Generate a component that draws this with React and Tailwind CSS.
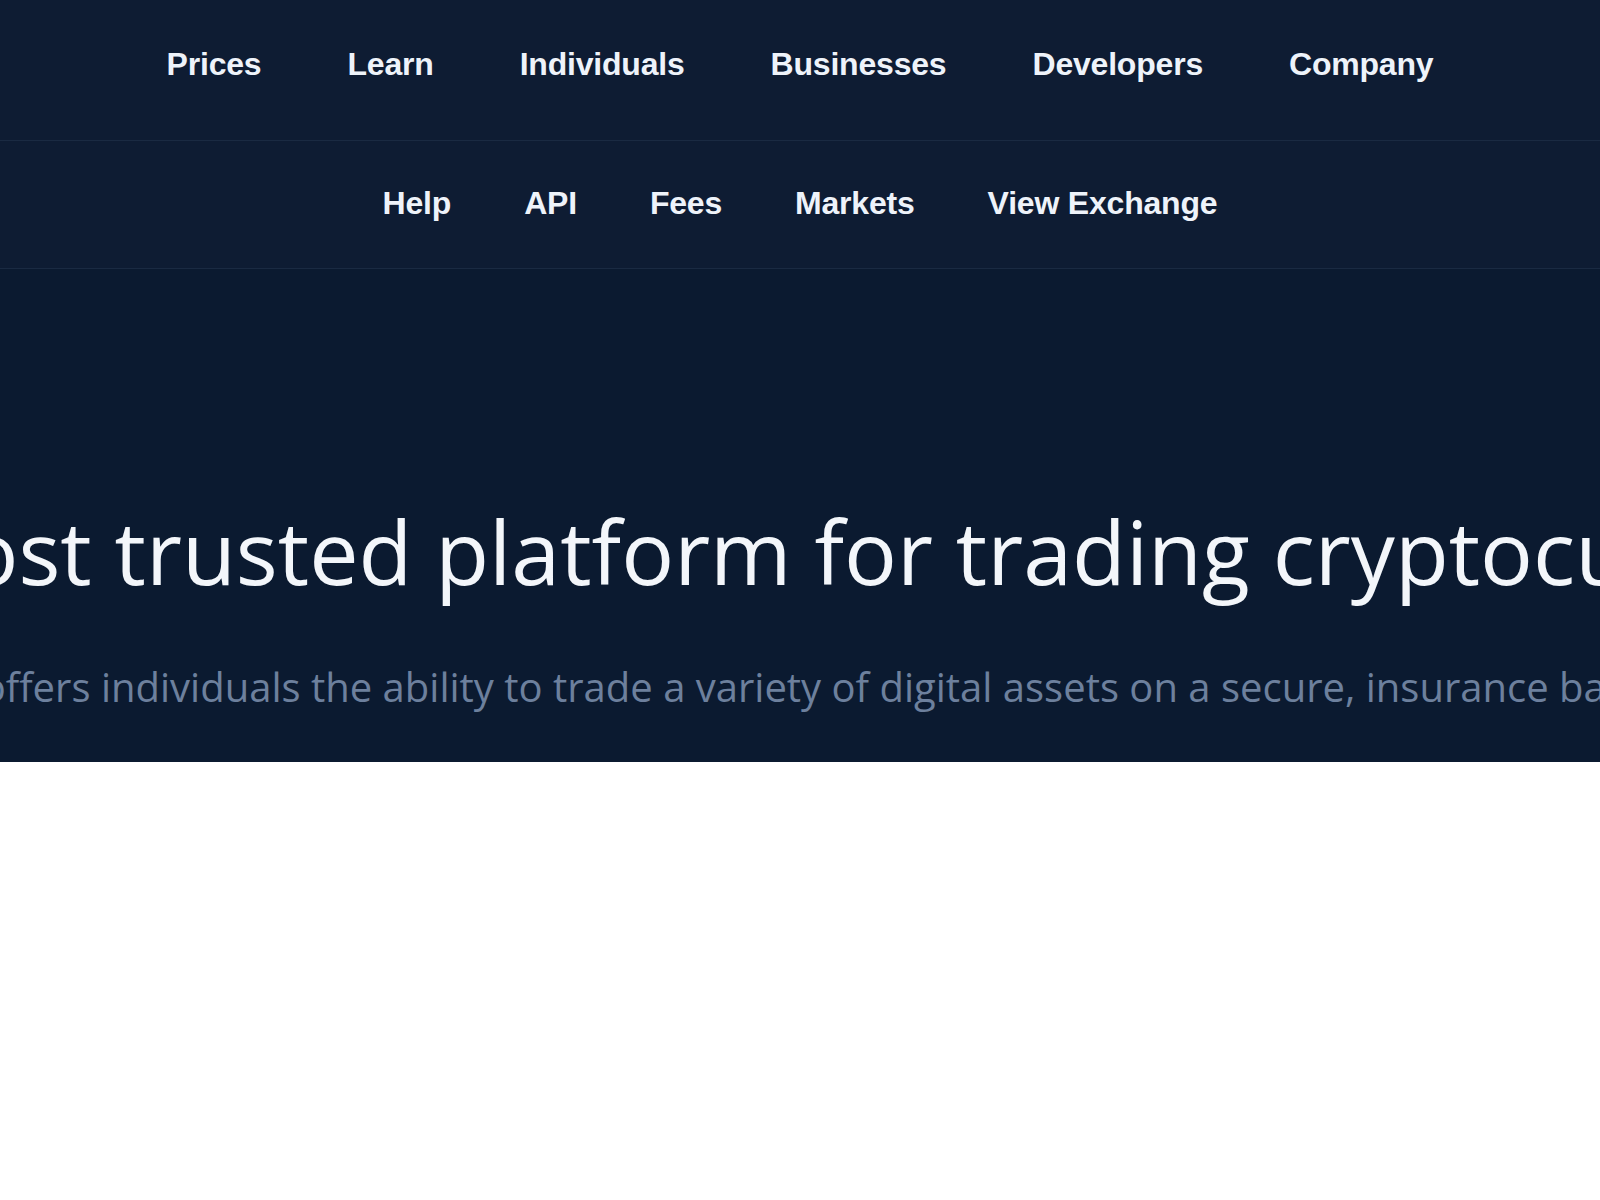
export default function App() {
  const top = ["Prices", "Learn", "Individuals", "Businesses", "Developers", "Company"];
  const sub = ["Help", "API", "Fees", "Markets", "View Exchange"];
  return (
    <div className="w-[1600px] min-h-[1200px] bg-white overflow-hidden">
      <nav className="bg-[#0e1c33] border-b border-[#1a2a42] pt-[44px] pb-[56px] flex justify-center gap-[86px] font-['Liberation_Sans',Arial,sans-serif] font-bold text-[32px] leading-10 text-[#eef3fa] tracking-[-0.2px]">
        {top.map((t) => (
          <a key={t} href="#" className="whitespace-nowrap">{t}</a>
        ))}
      </nav>
      <nav className="bg-[#0e1c33] border-b border-[#1a2a42] pt-[42px] pb-[45px] flex justify-center gap-[73px] font-['Liberation_Sans',Arial,sans-serif] font-bold text-[32px] leading-10 text-[#eef3fa] tracking-[-0.2px]">
        {sub.map((t) => (
          <a key={t} href="#" className="whitespace-nowrap">{t}</a>
        ))}
      </nav>
      <section className="bg-[#0b1a30] overflow-hidden flex flex-col items-center pt-[238px] pb-[55px] font-['Open_Sans','Noto_Sans',sans-serif]">
        <h1 className="whitespace-nowrap text-[88px] leading-none font-normal text-[#f3f6fa]">
          The most trusted platform for trading cryptocurrency
        </h1>
        <p className="whitespace-nowrap mt-[72px] text-[40px] leading-none text-[#6d809d]">
          Coinbase Pro offers individuals the ability to trade a variety of digital assets on a secure, insurance backed platform.
        </p>
      </section>
    </div>
  );
}
